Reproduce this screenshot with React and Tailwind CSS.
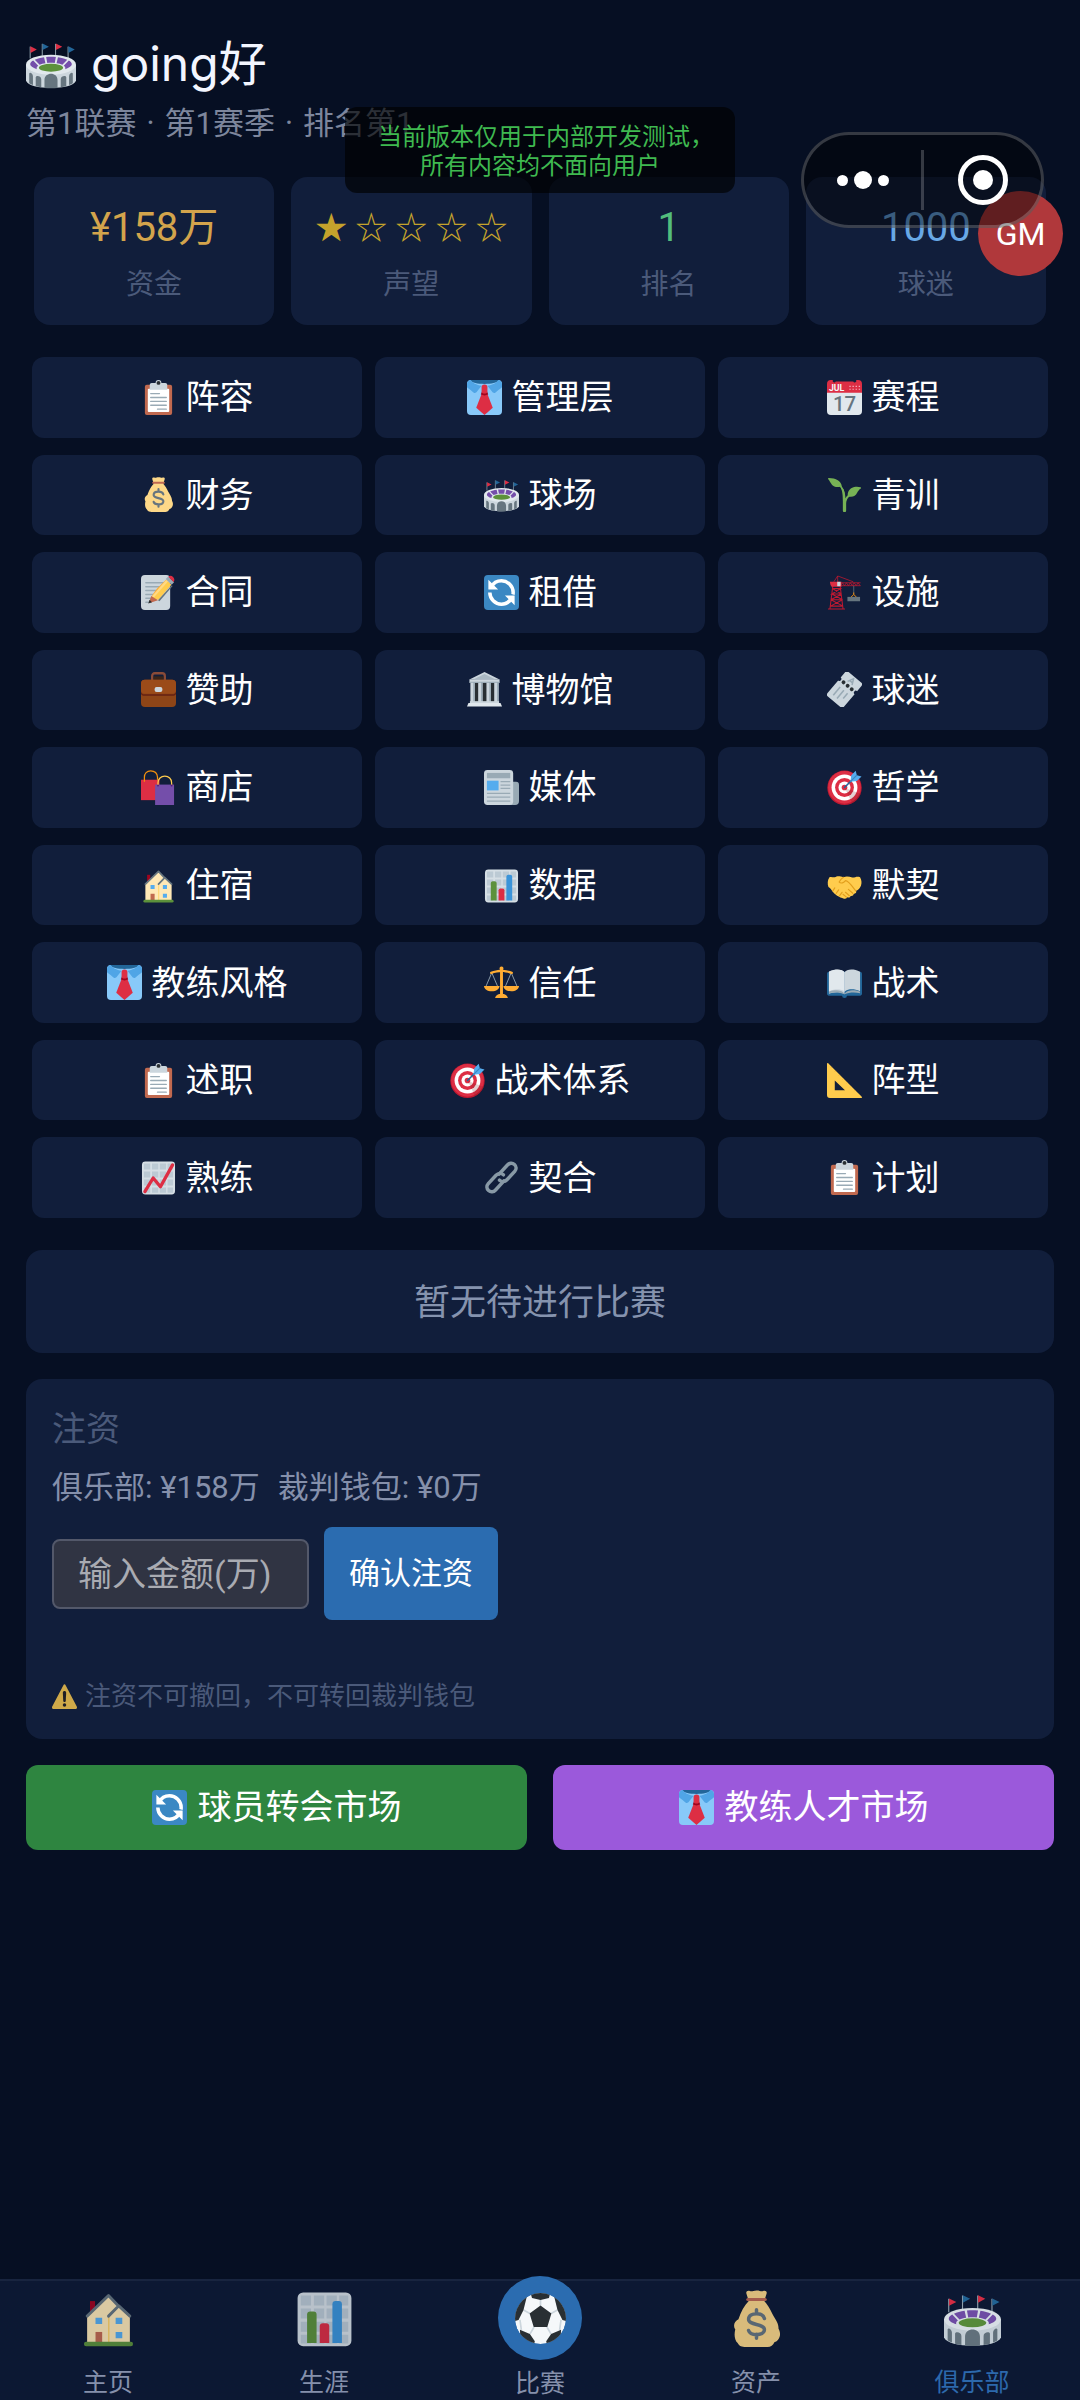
import React from "react";

function Icon({ children, className = "size-[35px]" }) {
  return (
    <svg viewBox="0 0 36 36" aria-hidden="true" className={`${className} shrink-0`}>
      {children}
    </svg>
  );
}

const Clipboard = (p) => (
  <Icon {...p}>
    <path fill="#C1694F" d="M32 34a2 2 0 0 1-2 2H6a2 2 0 0 1-2-2V7a2 2 0 0 1 2-2h24a2 2 0 0 1 2 2z" />
    <path fill="#FFF" d="M29 32a1 1 0 0 1-1 1H8a1 1 0 0 1-1-1V10a1 1 0 0 1 1-1h20a1 1 0 0 1 1 1z" />
    <path fill="#CCD6DD" d="M25 3h-4a3 3 0 0 0-6 0h-4a2 2 0 0 0-2 2v5h18V5a2 2 0 0 0-2-2z" />
    <circle fill="#292F33" cx="18" cy="3" r="2" />
    <path stroke="#99AAB5" strokeWidth="1.4" strokeLinecap="round" d="M10 14h9M10 18h16M10 22h16M10 26h16M17 30h9" />
  </Icon>
);

const Necktie = (p) => (
  <Icon {...p}>
    <rect fill="#88C9F9" width="36" height="36" rx="4" />
    <path fill="#269" d="M3 0h30c-2 3-8 4-15 4S5 3 3 0z" />
    <path fill="#50A5E6" d="M4 0C1.800 0 0 1.800 0 4v3.500c2.500 2 5 4 7 5.500 1.500.8 2.500-.2 3.500-1.500L15 6C10 5 5 3 4 0zM32 0c2.200 0 4 1.800 4 4v3.500c-2.500 2-5 4-7 5.500-1.500.8-2.500-.2-3.500-1.500L21 6c5-1 10-3 11-6z" />
    <path fill="#DD2E44" d="M15.500 13 9.500 28.500 18 36l8.500-7.500L20.500 13z" />
    <path fill="#A0041E" d="M15.200 12h5.600l1 3-3.800 1-3.800-1z" />
    <path fill="#DD2E44" d="M18 4.500c-2 0-3 1-3 2.700v4.300c0 1.500 1 2.500 3 2.500s3-1 3-2.500V7.200c0-1.700-1-2.700-3-2.700z" />
  </Icon>
);

const Calendar = (p) => (
  <Icon {...p}>
    <path fill="#E1E8ED" d="M36 32a4 4 0 0 1-4 4H4a4 4 0 0 1-4-4V9h36z" />
    <path fill="#DD2E44" d="M30 0a1.500 1.500 0 0 1-3 1.500h-18A1.500 1.500 0 0 1 6 0H4a4 4 0 0 0-4 4v9h36V4a4 4 0 0 0-4-4z" />
    <path stroke="#F4ABBA" strokeWidth="1.200" strokeDasharray="1.400 1.800" d="M23 6.500h11M23 9.500h11" />
    <text x="2" y="11" fontFamily="Roboto, sans-serif" fontSize="9" fontWeight="700" fill="#F5F8FA">JUL</text>
    <text x="18" y="32" textAnchor="middle" fontFamily="Roboto, sans-serif" fontSize="21" fontWeight="500" fill="#66757F">17</text>
  </Icon>
);

const MoneyBag = (p) => (
  <Icon {...p}>
    <path fill="#FDD888" d="M31.900 24.400c.2-3.500-2.500-6.500-4-9.500-1.400-3-3-5.800-5-7.900L24.300 2.500C25 .8 23.500 0 22.200.6 21 1.200 20 .2 18 .3c-2 0-3 .9-4.200.3C12.500 0 11 .8 11.700 2.500L13.100 7c-2.800 2.800-5 7-6.500 11.500-2.600 1.500-3.600 4-2 6.500-.8 3-.6 6.500 1.500 8.500C7 35.500 9 36 11 36h14c2 0 3.500-1 4.300-3 3-.8 4.800-5 2.600-8.600z" />
    <path fill="#BF6952" d="M12.500 5h11a1 1 0 0 1 0 2h-11a1 1 0 0 1 0-2z" />
    <path fill="none" stroke="#67757F" strokeWidth="2.200" strokeLinecap="round" d="M18 12.500v2.500M18 28v2.500M23 18c-.5-2-2.500-3-5-3s-5 1-5 3.500c0 4 10 2.500 10 6.500 0 2.200-2.500 3.200-5 3.200s-4.500-1-5-2.600" />
  </Icon>
);

const Stadium = (p) => (
  <Icon {...p}>
    <path stroke="#99AAB5" strokeWidth=".7" d="M3 5.500V14M11.700 3.500V12M21.300 3.500V12M30.300 5.500V14" />
    <path fill="#DD2E44" d="m3.200 5.300 4.600 2.300-4.600 2.400zM21.500 3.300l4.600 2.300-4.600 2.400z" />
    <path fill="#269" d="m11.900 3.300 4.600 2.300L11.900 8zM30.500 5.300l4.600 2.300-4.600 2.400z" />
    <path fill="#CCD6DD" d="M0 18.500V30c1.500 3.500 9 5.200 18 5.200S34.500 33.500 36 30V18.500z" />
    <ellipse fill="#E1E8ED" cx="18" cy="18.500" rx="18" ry="7.200" />
    <path fill="#744EAA" d="M14.500 12.900 15.300 17.300c1.700-.2 3.700-.2 5.400 0l.8-4.400c-2.300-.2-4.700-.2-7 0zM13 13.100l1 4.400c-1.700.2-3 .6-4.200 1.100L6.300 15c1.800-.9 4.200-1.600 6.700-1.900zM23 13.100l-1 4.400c1.700.2 3 .6 4.200 1.100l3.500-3.600c-1.800-.9-4.200-1.600-6.700-1.900zM5.200 15.500l3.600 3.700c-1 .7-1.400 1.500-1 2.500-3-1-4.800-2.200-4.800-3.500 0-1 .8-1.900 2.200-2.700zM30.800 15.500l-3.600 3.700c1 .7 1.400 1.500 1 2.500 3-1 4.800-2.200 4.800-3.500 0-1-.8-1.900-2.200-2.700z" />
    <ellipse fill="#5C913B" cx="18" cy="20.700" rx="8.700" ry="2.800" />
    <path fill="#66757F" d="M13.300 35.200V29.500c0-6 9.400-6 9.400 0v5.700c-3 .3-6.500.3-9.400 0zM7 34v-6.500c.3-1.500 4-1 4 1.500v5.800c-1.500-.2-2.800-.5-4-.8zM29 34v-6.500c-.3-1.500-4-1-4 1.500v5.800c1.500-.2 2.800-.5 4-.8zM2.300 31.800v-7c.5-1.200 2.700.2 2.700 2v6.400c-1-.4-2-.8-2.700-1.400zM33.700 31.800v-7c-.5-1.200-2.700.2-2.700 2v6.400c1-.4 2-.8 2.700-1.400z" />
  </Icon>
);

const Seedling = (p) => (
  <Icon {...p}>
    <path fill="#77B255" d="M34.500 10.500c-5-1.500-11 .2-12.600 4.700-.8 2-.6 3.200-.5 3.600-1 .8-2 2.200-2.400 3.700-.2-5-.8-9.500-3.700-12.600C15 4 9 1 1.800 1c-.6 0-1 .6-.6 1.200C3 3.500 4 8 7.500 9.700c2.300 1 4.500.6 6 .2 2.500 3.500 2.800 9 2.800 15.100v9.500a1.700 1.700 0 0 0 3.400 0V27c.2-3 1.200-5.600 3.300-6.800 4 .6 6.500-1 8-4 .9-1.800 2-3.500 3.800-4.500.5-.4.3-1-.3-1.200z" />
    <path fill="none" stroke="#77B255" strokeWidth="1.500" d="M12 8c4 2 6 8 6 16M24 18c-3 2-6 5-6 10" />
  </Icon>
);

const Memo = (p) => (
  <Icon {...p}>
    <rect fill="#CCD6DD" y="0" width="30" height="36" rx="4" />
    <path stroke="#99AAB5" strokeWidth="1.500" strokeLinecap="round" d="M5 8h18M5 12h20M5 16h16M5 20h12M5 24h8M5 28h5" />
    <path fill="#FFAC33" d="m12 20 4.500-6L26 4.500l5 5.500L18 24.500l-9.500 4z" />
    <path fill="#FFD983" d="m11 22 15-17 2.500 2.500L14 24z" />
    <path fill="#FFCC4D" d="m12.500 24 15-17 3.500 3L18 25.500z" />
    <path fill="#C1694F" d="M10.500 21.500 8 29l9.500-3z" />
    <path fill="#292F33" d="m8.800 25.500-1.300 3.800 3.800-1.300z" />
    <path fill="#99AAB5" d="M25.500 4 28 1.500l6 6L31.500 10z" />
    <path fill="#DD2E44" d="M28 1.700C29.500.2 31.500.5 33 2s1.800 3.500.5 5.300z" />
    <path fill="#66757F" d="m17.500 26 14-15.500 1 .8L19 27z" />
  </Icon>
);

const Refresh = (p) => (
  <Icon {...p}>
    <rect fill="#3B88C3" width="36" height="36" rx="4" />
    <path fill="none" stroke="#FFF" strokeWidth="3.600" d="M7.500 12.500C9.500 8.500 13.500 6 18 6c6.600 0 12 5.400 12 12 0 .7 0 1.300-.2 2M28.500 23.500C26.500 27.500 22.500 30 18 30c-6.600 0-12-5.400-12-12" />
    <path fill="#FFF" d="M4.500 5V15h10zM31.500 31V21h-10z" />
  </Icon>
);

const Crane = (p) => (
  <Icon {...p}>
    <path fill="none" stroke="#BE1931" strokeWidth="1.100" d="M6 11 3 35M13.500 11l3 24M5.500 14h8.500L5 19.500h10L4 25.500h12L3.500 32h13L4 25.500M15 19.500 5.500 14M16 25.500 5 19.500M1 35h17.500" />
    <path fill="none" stroke="#BE1931" strokeWidth=".8" d="m7 7 4-6 16 6M11 1v7" />
    <path fill="#DD2E44" d="M3 7h12v5H5c-1.500 0-2-5-2-5z" />
    <path fill="none" stroke="#BE1931" strokeWidth=".8" d="M14 8h20.500M14 11h20.500M14 11l2-3 2 3 2-3 2 3 2-3 2 3 2-3 2 3 2-3 2 3" />
    <path fill="#CCD6DD" d="M10.500 7H14v4.500h-3.500z" />
    <path stroke="#66757F" strokeWidth=".8" d="M27.500 11v9" />
    <path fill="none" stroke="#F4900C" strokeWidth="1" d="M27.500 18v2l-3 3M27.500 20l3 3" />
    <path fill="#66757F" d="M21 22.500h13v4.500H21z" />
  </Icon>
);

const Briefcase = (p) => (
  <Icon {...p}>
    <path fill="none" stroke="#8A4B38" strokeWidth="2.400" d="M11.500 10V4c0-1.700 1-2.700 2.700-2.700h7.600c1.700 0 2.700 1 2.700 2.700v6" />
    <path fill="#3B2417" d="M13 4.500h10V8H13z" />
    <rect fill="#8E4517" y="8" width="36" height="28" rx="4" />
    <path fill="#662113" d="M0 20c0 1.500 1.500 3 4 3h28c2.500 0 4-1.500 4-3v2c0 1.500-1.500 2.500-4 2.500H4c-2.500 0-4-1-4-2.500z" />
    <path fill="#9B4B19" d="M4 8h28a4 4 0 0 1 4 4v7a4 4 0 0 1-4 3H4a4 4 0 0 1-4-3v-7a4 4 0 0 1 4-4z" />
    <rect fill="#CCD6DD" x="14" y="15.500" width="8" height="5" rx="2" />
  </Icon>
);

const Museum = (p) => (
  <Icon {...p}>
    <path fill="#292F33" d="M4 11h28v20H4z" />
    <path fill="#CCD6DD" d="M18 0 3 7.500h30z" />
    <path fill="#AAB8C2" d="M18 2 7 7.500h22z" />
    <path fill="#CCD6DD" d="M2.500 7.500h31v3.500h-31zM3.500 11H8v20H3.500zM11.500 11H16v20h-4.500zM20 11h4.500v20H20zM28 11h4.500v20H28z" />
    <path fill="#99AAB5" d="M6.500 11H8v20H6.500zM14.500 11H16v20h-1.500zM23 11h1.500v20H23zM31 11h1.500v20H31zM2.500 10h31v1h-31z" />
    <path fill="#CCD6DD" d="M3 30h30v2.500H3z" />
    <path fill="#E1E8ED" d="M1.500 32h33l1.500 3.500H0z" />
  </Icon>
);

const Ticket = (p) => (
  <Icon {...p}>
    <g transform="rotate(40 18 18)">
      <path fill="#CCD6DD" d="M9.500 1.500h17a2.500 2.500 0 0 1 2.500 2.500v7a2 2 0 0 0 0 4v17a2.500 2.500 0 0 1-2.500 2.500h-17A2.500 2.500 0 0 1 7 32V15a2 2 0 0 0 0-4V4a2.500 2.500 0 0 1 2.500-2.500z" />
      <g fill="#292F33">
        <circle cx="12.500" cy="13" r="2" />
        <circle cx="18" cy="13" r="2" />
        <circle cx="23.500" cy="13" r="2" />
      </g>
      <path fill="none" stroke="#99AAB5" strokeWidth="1.500" d="m15 9.500 3-6 3 6M16 7.500h4" />
      <path stroke="#99AAB5" strokeWidth="1.600" d="M13 19v11M18 19v11M23 19v7" />
    </g>
  </Icon>
);

const Bags = (p) => (
  <Icon {...p}>
    <path fill="#DD2E44" d="M0 10h19v21H0z" />
    <path fill="none" stroke="#F4900C" strokeWidth="1.300" d="M3.500 12V7.500C3.500 3.500 6 .8 10 .8s7 2.700 7 6.700V10" />
    <path fill="#744EAA" d="M14.500 15H34v21H14.500z" />
    <path fill="none" stroke="#FFCC4D" strokeWidth="1.300" d="M17.500 16v-3c0-4 3-6.700 7-6.700s7 2.700 7 6.700v3" />
    <g fill="#55187A">
      <circle cx="17.500" cy="16" r="1" />
      <circle cx="31.500" cy="16" r="1" />
    </g>
  </Icon>
);

const Newspaper = (p) => (
  <Icon {...p}>
    <path fill="#99AAB5" d="M27 12h6a3 3 0 0 1 3 3v17a4 4 0 0 1-4 4h-5z" />
    <rect fill="#CCD6DD" width="30" height="36" rx="3.500" />
    <path fill="#99AAB5" d="M3 3h24v5.500H3z" />
    <path fill="#55ACEE" d="M3 11h12v10H3z" />
    <path stroke="#99AAB5" strokeWidth="1.300" d="M17 12h10M17 15.500h10M17 19h10M3 24h24M3 28h24M3 32h24" />
  </Icon>
);

const Target = (p) => (
  <Icon {...p}>
    <circle fill="#BE1931" cx="18" cy="18.300" r="17.700" />
    <circle fill="#DD2E44" cx="18" cy="17.800" r="16.800" />
    <circle fill="#FFF" cx="18" cy="18" r="13.300" />
    <circle fill="#DD2E44" cx="18" cy="18" r="9.700" />
    <circle fill="#FFF" cx="18" cy="18" r="6.200" />
    <circle fill="#DD2E44" cx="18" cy="18" r="2.900" />
    <path fill="#78191F" opacity=".2" d="m18.200 18.300 7.600 16c4-1.800 7.200-5.200 9-9.500z" />
    <path stroke="#226699" strokeWidth="1.600" strokeLinecap="round" d="m18 18 8-8" />
    <path fill="#55ACEE" d="m24 12 1-6.500L29.500.8l1.200 4.600 4.800 1.200-4.700 4.700z" />
    <path stroke="#3A87C2" strokeWidth="1.200" d="m24 12 7-7" />
  </Icon>
);

const House = (p) => (
  <Icon {...p}>
    <path fill="#A0041E" d="M6.300 7h3.200v8H6.300z" />
    <path fill="#FFE8B6" d="M4.500 16 18 3.500l6.500 7 7 6.500v16h-27z" />
    <path stroke="#FFCC4D" strokeWidth=".7" d="M18.200 17v16" />
    <path fill="none" stroke="#66757F" strokeWidth="1.800" strokeLinecap="round" strokeLinejoin="round" d="M4.500 16.500 18 3.500l6 6.300M18 16.500l6.500-6.500 7 6.500" />
    <path fill="#55ACEE" d="M9.800 17.500H14v4H9.800zM22.500 17.500h4.200v4h-4.200zM22.500 26.500h4.200v4h-4.200z" />
    <path fill="#C1694F" d="M9.800 26.500H14V33H9.800z" />
    <rect fill="#5C913B" x="2.500" y="32.700" width="31" height="2.800" rx="1.400" />
  </Icon>
);

const ChartGrid = () => (
  <>
    <rect fill="#D6DFE5" x="1" y="1.500" width="34" height="34" rx="3.500" />
    <path fill="#BCCAD4" d="M3 3.500h6.500v6.300H3zM11.300 3.500h6.500v6.300h-6.500zM19.300 3.500h6.500v6.300h-6.500zM27.300 3.500H33v6.300h-5.700zM3 11.700h6.500V18H3zM11.300 11.700h6.500V18h-6.500zM19.300 11.700h6.500V18h-6.500zM27.300 11.700H33V18h-5.700zM3 20h6.500v6.300H3zM11.300 20h6.500v6.300h-6.500zM19.300 20h6.500v6.300h-6.500zM27.300 20H33v6.300h-5.700zM3 28.300h6.500v5.500H3zM11.300 28.300h6.500v5.500h-6.500zM19.300 28.300h6.500v5.500h-6.500zM27.300 28.300H33v5.500h-5.700z" />
  </>
);

const BarChart = (p) => (
  <Icon {...p}>
    <ChartGrid />
    <path fill="#5C913B" d="M13 33.500H7v-18a2 2 0 0 1 2-2h2a2 2 0 0 1 2 2z" />
    <path fill="#3B94D9" d="M29 33.500h-6V9a2 2 0 0 1 2-2h2a2 2 0 0 1 2 2z" />
    <path fill="#DD2E44" d="M21 33.500h-6V23a2 2 0 0 1 2-2h2a2 2 0 0 1 2 2z" />
  </Icon>
);

const TrendChart = (p) => (
  <Icon {...p}>
    <ChartGrid />
    <path fill="none" stroke="#DD2E44" strokeWidth="3.400" strokeLinecap="round" strokeLinejoin="round" d="m4 32.500 8.500-14 7.500 9L32.500 5" />
  </Icon>
);

const Handshake = (p) => (
  <Icon {...p}>
    <path fill="#FFCC4D" d="M2.500 9.500C.5 12 .3 17 1.500 19.500c1.500 1 3 2.500 4 4.500 2 3 7 6.500 12 7.500 2 .5 3-.5 3.200-1.300 2 .6 3.300-.2 3.500-1.500 2 .3 3.200-.6 3.200-2 2 0 3.200-1.600 2.600-3.200 2.500-.8 4-3 5-5.500 1-3 .5-6-1-8.500-3-1.500-5.500.5-8 .2-3-.7-6-1.500-9-.2C12 7.700 10 8.500 8 9.500c-1.500.5-3.500-1-5.500 0z" />
    <path fill="none" stroke="#E39F1D" strokeWidth="1.200" strokeLinecap="round" strokeLinejoin="round" d="M17 9.500c-2 1-3.500 3-4.500 5 2 2 5 .5 6.500-1.500 3 0 6 4.500 10.500 10.500M26.500 26l-4.500-4M23 28.500 19 25M20 30l-3.500-3M8 20.500l-2 3M12 22.500 9.500 26M15.500 25 13 28.500" />
  </Icon>
);

const Scales = (p) => (
  <Icon {...p}>
    <path fill="none" stroke="#99AAB5" strokeWidth=".9" d="M8 8 2 22M8 8l6 14M28 8l-6 14M28 8l6 14" />
    <path fill="#FFAC33" d="M16.500 5.500h3V31h-3zM18 1.500a2 2 0 0 1 1.500 3.300c3 .3 6 1 9.500 2.200a1.200 1.200 0 0 1-.8 2.300C24.500 8 21 7.300 18 7.300S11.500 8 7.800 9.300A1.200 1.200 0 0 1 7 7c3.500-1.200 6.500-1.900 9.500-2.200A2 2 0 0 1 18 1.500zM0 21.500h16c0 3-3.500 5.500-8 5.500s-8-2.500-8-5.500zM20 21.500h16c0 3-3.500 5.500-8 5.500s-8-2.500-8-5.500zM11.500 34c0-2.500 3-4.500 6.500-4.500s6.500 2 6.500 4.500z" />
  </Icon>
);

const Book = (p) => (
  <Icon {...p}>
    <path fill="#226699" d="M2 7h32c1 0 2 1 2 2v20.500c0 1-1 2-2 2H20.500a2.500 2.500 0 0 1-5 0H2c-1 0-2-1-2-2V9c0-1 1-2 2-2z" />
    <path fill="#CCD6DD" d="M2 27V7.500C2 6 7 5 11 5s6 1 7 2.500V30c-2-1.500-5-2-8-2s-6 .8-8 1.500z" />
    <path fill="#E1E8ED" d="M2 27V7c3-2 6-2.500 9-2.500S17 5.500 18 7.500v20C16 25.500 13 25 10.500 25S5 25.500 2 27z" />
    <path fill="#CCD6DD" d="M34 27V7c-3-2-6-2.500-9-2.500S19 5.500 18 7.500v20c2-2 5-2.500 7.500-2.500S31 25.500 34 27z" />
    <path fill="#99AAB5" d="M18 29.500c2-2.500 5-3.500 8-3.500s6 .5 8 1.500v1.500c-5-1.200-11-1.200-16 1-5-2.200-11-2.200-16-1v-1.500c2-1 5-1.500 8-1.500s6 1 8 3.500z" />
  </Icon>
);

const SetSquare = (p) => (
  <Icon {...p}>
    <path fill="#FFCC4D" fillRule="evenodd" d="M1.500.5C.7-.3 0 0 0 1v32a3 3 0 0 0 3 3h32c1 0 1.300-.7.5-1.500zM8 18l10.500 10H8z" />
    <path stroke="#F4900C" strokeWidth=".8" d="m4 5 1-1M8 9l1-1M12 13l1-1M16 17l1-1M20 21l1-1M24 25l1-1M28 29l1-1" opacity=".5" />
  </Icon>
);

const Link = (p) => (
  <Icon {...p}>
    <g fill="none" stroke="#8899A6" strokeWidth="3.600" strokeLinecap="round">
      <path d="m15.500 14.500 8.600-9.300c2-2.200 5-2.600 7.200-.6s2.200 5 .3 7.100l-8 8.600c-2.300 2.400-5.300 2.500-7.600.5" />
      <path d="m20.500 21.500-8.600 9.300c-2 2.200-5 2.600-7.200.6s-2.200-5-.3-7.100l8-8.600c2.300-2.400 5.300-2.500 7.600-.5" />
    </g>
  </Icon>
);

const Warning = (p) => (
  <Icon {...p}>
    <path fill="#FFCC4D" d="M2.700 36C.3 36-.7 34.300.5 32.200L16.200 2c1-2 2.600-2 3.600 0l15.700 30.200c1.200 2.100.2 3.800-2.200 3.800z" />
    <path fill="#231F20" d="M15.600 12.500c0-3.200 4.800-3.200 4.800 0l-.6 12c-.2 2-3.400 2-3.600 0z" />
    <circle fill="#231F20" cx="18" cy="30.300" r="2.500" />
  </Icon>
);

const SoccerBall = (p) => (
  <Icon {...p}>
    <clipPath id="ball">
      <circle cx="18" cy="18" r="18" />
    </clipPath>
    <g clipPath="url(#ball)">
      <circle fill="#F5F8FA" cx="18" cy="18" r="18" />
      <path fill="none" stroke="#CCD6DD" strokeWidth="1.200" d="M18 9V4M10.500 14.500 6 12M25.500 14.500 30 12M13.500 24l-3 5M22.500 24l3 5M3.500 19l1 7M32.500 19l-1 7" />
      <path fill="#292F33" d="m18 8.800 7.700 5.700-2.900 9.500h-9.600l-2.900-9.500zM11 0l1 3.500 6 1.500 6-1.500L25-1zM8.500 2 6 12l-3.500 7L-1 20V6zM27.500 2 30 12l3.500 7 3.500 1V6zM3.500 26l7 3 3.500 5-1 4H4zM32.500 26l-7 3-3.500 5 1 4h9z" />
    </g>
  </Icon>
);

const stats = [
  { value: "¥158万", label: "资金", color: "text-[#d3a44c]" },
  { rating: 1, label: "声望", color: "text-[#c4a22c]" },
  { value: "1", label: "排名", color: "text-[#53bd7d]" },
  { value: "1000", label: "球迷", color: "text-[#68a8e6]" },
];

const menu = [
  [Clipboard, "阵容"],
  [Necktie, "管理层"],
  [Calendar, "赛程"],
  [MoneyBag, "财务"],
  [Stadium, "球场"],
  [Seedling, "青训"],
  [Memo, "合同"],
  [Refresh, "租借"],
  [Crane, "设施"],
  [Briefcase, "赞助"],
  [Museum, "博物馆"],
  [Ticket, "球迷"],
  [Bags, "商店"],
  [Newspaper, "媒体"],
  [Target, "哲学"],
  [House, "住宿"],
  [BarChart, "数据"],
  [Handshake, "默契"],
  [Necktie, "教练风格"],
  [Scales, "信任"],
  [Book, "战术"],
  [Clipboard, "述职"],
  [Target, "战术体系"],
  [SetSquare, "阵型"],
  [TrendChart, "熟练"],
  [Link, "契合"],
  [Clipboard, "计划"],
];

function Stars({ count }) {
  return (
    <span className="flex gap-2 text-[32px]">
      {[1, 2, 3, 4, 5].map((n) => (
        <span key={n}>{n <= count ? "★" : "☆"}</span>
      ))}
    </span>
  );
}

function TabLink({ icon: TabIcon, label, active }) {
  return (
    <a
      href="#"
      aria-current={active ? "page" : undefined}
      className={`flex flex-1 flex-col items-center pt-[9px] ${active ? "text-[#2c69ac]" : "text-[#8590ab]"}`}
    >
      <TabIcon className={active ? "size-[57px] opacity-95" : "size-[57px] opacity-85"} />
      <span className="mt-5 text-[25px] leading-[32px]">{label}</span>
    </a>
  );
}

export default function App() {
  return (
    <div className="relative flex min-h-screen flex-col bg-[#060f23] font-[Roboto,'Noto_Sans_CJK_SC',sans-serif] text-white">
      <main className="flex-1 px-[26px] pt-9 pb-8">
        <header>
          <h1 className="flex items-center gap-[15px] font-[Inter,'Noto_Sans_CJK_SC',sans-serif] text-[48px] leading-[56px] text-[#f3f6ff]">
            <Stadium className="size-[50px]" />
            going好
          </h1>
          <p className="mt-3 flex gap-[10px] text-[31px] leading-[40px] text-[#7d869c]">
            <span>第1联赛</span>
            <span>·</span>
            <span>第1赛季</span>
            <span>·</span>
            <span>排名第1</span>
          </p>
        </header>

        <section aria-label="俱乐部概况" className="mt-[33px] grid grid-cols-4 gap-[17px] px-2">
          {stats.map((s) => (
            <div key={s.label} className="flex flex-col items-center rounded-2xl bg-[#111e3b] pt-[27px] pb-[22px] whitespace-nowrap">
              <span className={`text-[40px] leading-[48px] ${s.color}`}>{s.rating ? <Stars count={s.rating} /> : s.value}</span>
              <span className="mt-[15px] text-[28px] leading-[36px] text-[#4b5a7a]">{s.label}</span>
            </div>
          ))}
        </section>

        <section aria-label="功能" className="mt-8 grid min-h-[861px] auto-rows-fr grid-cols-3 gap-x-[13px] gap-y-[17px] px-1.5">
          {menu.map(([MenuIcon, label]) => (
            <button key={label} type="button" className="flex items-center justify-center gap-2.5 rounded-xl bg-[#111e3b] text-[34px] leading-[48px]">
              <MenuIcon />
              {label}
            </button>
          ))}
        </section>

        <p className="mt-8 rounded-2xl bg-[#111e3b] pt-7 pb-6 text-center text-[36px] leading-[51px] text-[#8593ae]">暂无待进行比赛</p>

        <section className="mt-[26px] rounded-2xl bg-[#111e3b] px-[26px] pt-7 pb-[25px]">
          <h2 className="text-[34px] leading-[44px] text-[#4b5a7a]">
            <label htmlFor="amount">注资</label>
          </h2>
          <p className="mt-[17px] flex gap-[18px] text-[31px] leading-[40px] text-[#8590ab]">
            <span>俱乐部: ¥158万</span>
            <span>裁判钱包: ¥0万</span>
          </p>
          <form className="mt-[19px] flex items-center gap-[15px]" onSubmit={(e) => e.preventDefault()}>
            <input
              id="amount"
              type="text"
              inputMode="numeric"
              placeholder="输入金额(万)"
              className="w-[257px] rounded-lg border-2 border-[#53586a] bg-[#303443] px-6 py-2 text-[34px] leading-[50px] outline-none placeholder:text-[#a9abb2]"
            />
            <button type="submit" className="rounded-lg bg-[#2b6cb0] px-[25px] py-[26px] text-[31px] leading-[41px]">
              确认注资
            </button>
          </form>
          <p className="mt-[58px] flex items-center gap-2 text-[26px] leading-[36px] text-[#4b5a7a]">
            <Warning className="size-[25px] opacity-80" />
            注资不可撤回，不可转回裁判钱包
          </p>
        </section>

        <div className="mt-[26px] grid grid-cols-2 gap-[26px] text-[34px] leading-[49px]">
          <button type="button" className="flex items-center justify-center gap-[11px] rounded-xl bg-[#2e8540] py-[18px]">
            <Refresh />
            球员转会市场
          </button>
          <button type="button" className="flex items-center justify-center gap-[11px] rounded-xl bg-[#9b59db] py-[18px]">
            <Necktie />
            教练人才市场
          </button>
        </div>
      </main>

      <nav className="sticky bottom-0 flex border-t-2 border-[#18243f] bg-[#0c1833]">
        <TabLink icon={House} label="主页" />
        <TabLink icon={BarChart} label="生涯" />
        <a href="#" className="-mt-[5px] flex flex-1 flex-col items-center text-[#8590ab]">
          <span className="flex size-[84px] items-center justify-center rounded-full bg-[#2b6cb0]">
            <SoccerBall className="size-[51px]" />
          </span>
          <span className="mt-2 text-[25px] leading-[32px]">比赛</span>
        </a>
        <TabLink icon={MoneyBag} label="资产" />
        <TabLink icon={Stadium} label="俱乐部" active />
      </nav>

      <div
        role="status"
        className="absolute top-[107px] left-1/2 w-[390px] -translate-x-1/2 rounded-xl bg-black/65 pt-4 pb-3 text-center text-[24px] leading-[29px] text-[#3fb950] [font-feature-settings:'halt']"
      >
        当前版本仅用于内部开发测试，
        <br />
        所有内容均不面向用户
      </div>

      <button type="button" className="absolute top-[191px] right-[17px] size-[85px] rounded-full bg-[#b0383b] text-[32px] leading-[40px]">
        GM
      </button>

      <div className="absolute top-[132px] right-9 flex h-24 w-[243px] items-center rounded-full border-3 border-white/20 bg-black/45">
        <button type="button" aria-label="更多" className="flex flex-1 items-center justify-center gap-[6px]">
          <span className="size-[11px] rounded-full bg-white" />
          <span className="size-[18px] rounded-full bg-white" />
          <span className="size-[11px] rounded-full bg-white" />
        </button>
        <span className="h-[60px] w-[3px] bg-white/20" />
        <button type="button" aria-label="关闭" className="flex flex-1 items-center justify-center">
          <span className="flex size-[50px] items-center justify-center rounded-full border-5 border-white">
            <span className="size-5 rounded-full bg-white" />
          </span>
        </button>
      </div>
    </div>
  );
}
